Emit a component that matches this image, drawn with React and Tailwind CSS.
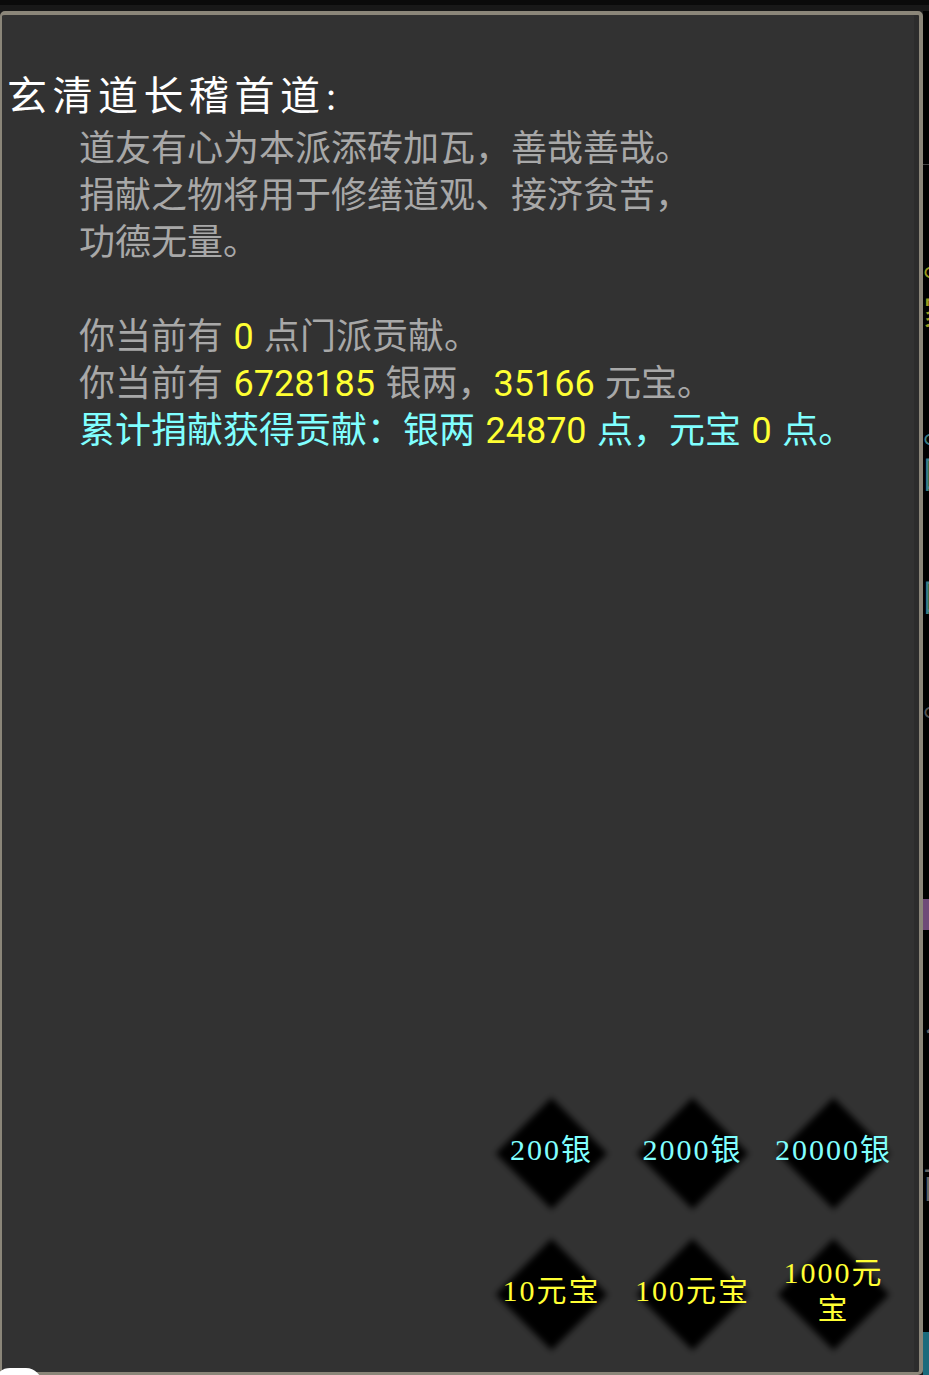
import React from "react";

const serif = "font-['Liberation_Serif','Noto_Sans_CJK_SC',serif]";

// donation buttons, two rows of three
const donations = [
  { label: "200银", color: "text-[#80ffff]" },
  { label: "2000银", color: "text-[#80ffff]" },
  { label: "20000银", color: "text-[#80ffff]" },
  { label: "10元宝", color: "text-[#ffff33]" },
  { label: "100元宝", color: "text-[#ffff33]" },
  { label: "1000元宝", color: "text-[#ffff33]" },
];

const Num = ({ children }) => <span className="text-[#ffff33]">{children}</span>;

const DonateButton = ({ label, color }) => (
  <button className="relative flex h-[141px] w-[141px] items-center justify-center">
    <span className="absolute left-[31px] top-[31px] h-[79px] w-[79px] rotate-45 bg-black blur-[3px]" />
    <span className={`relative mb-[8px] w-[122px] text-center text-[30px] leading-[36px] tracking-[2px] ${serif} ${color}`}>
      {label}
    </span>
  </button>
);

// bits of the page underneath that stick out to the right of the panel
const Backdrop = () => (
  <div className="flex h-full w-[6px] shrink-0 flex-col overflow-hidden bg-black text-[36px] leading-[40px] font-['Noto_Sans_CJK_SC',sans-serif]">
    <div className="h-[154px] shrink-0 border-b border-[#444]" />
    <div className="mt-[75px] h-[40px] shrink-0 whitespace-nowrap text-[#9a9a20]">。</div>
    <div className="mt-[10px] h-[40px] shrink-0 whitespace-nowrap text-[#9a9a20]">家</div>
    <div className="mt-[77px] h-[40px] shrink-0 whitespace-nowrap text-[#3f7f86]">。</div>
    <div className="mt-[5px] h-[40px] shrink-0 whitespace-nowrap text-[#3f7f86]">国</div>
    <div className="mt-[83px] h-[40px] shrink-0 whitespace-nowrap text-[#3f7f86]">国</div>
    <div className="mt-[65px] h-[40px] shrink-0 whitespace-nowrap text-[#555]">。</div>
    <div className="mt-[179px] h-[31px] shrink-0 bg-[#6f4a78]" />
    <div className="mt-[83px] h-[40px] shrink-0 whitespace-nowrap text-[#666]">台</div>
    <div className="mt-[109px] h-[40px] shrink-0 whitespace-nowrap text-[#666]">面</div>
    <div className="mt-[130px] flex-1 bg-[#1b6a7c]" />
  </div>
);

export default function App() {
  return (
    <div className="relative flex h-[1375px] w-[929px] flex-col overflow-hidden bg-[#181818]">
      <div className="h-[5px] shrink-0 bg-[#0a0a0a]" />
      <div className="flex min-h-0 flex-1 pt-[6px]">
        <div className="flex h-full w-[923px] shrink-0 flex-col justify-between rounded-[5px] border-t-[4px] border-r-[4px] border-b-[3px] border-l-[2px] border-[#8b8679] bg-[#323232] shadow-[inset_-5px_0_0_#2c2c2c]">
          <div className="pt-[55px]">
            <h1 className={`pl-[5px] text-[40px] leading-[54px] font-normal tracking-[5.5px] text-white ${serif}`}>
              玄清道长稽首道:
            </h1>
            <div className="pt-[2px] pl-[77px] text-[36px] leading-[47px] text-[#a8a8a8] font-['Roboto','Noto_Sans_CJK_SC',sans-serif] [word-spacing:1.5px]">
              <p>道友有心为本派添砖加瓦，善哉善哉。</p>
              <p>捐献之物将用于修缮道观、接济贫苦，</p>
              <p>功德无量。</p>
              <p className="mt-[47px]">
                你当前有 <Num>0</Num> 点门派贡献。
              </p>
              <p>
                你当前有 <Num>6728185</Num> 银两，<Num>35166</Num> 元宝。
              </p>
              <p className="whitespace-nowrap text-[#80ffff]">
                累计捐献获得贡献：银两 <Num>24870</Num> 点，元宝 <Num>0</Num> 点。
              </p>
            </div>
          </div>

          <div className="grid grid-cols-[repeat(3,141px)] justify-end pr-[15px] pb-[7px]">
            {donations.map((d) => (
              <DonateButton key={d.label} label={d.label} color={d.color} />
            ))}
          </div>
        </div>
        <Backdrop />
      </div>
      {/* white corner of something lying over the bottom left */}
      <div className="absolute -bottom-[14px] -left-[6px] h-[21px] w-[48px] rounded-t-[16px] bg-white" />
    </div>
  );
}
